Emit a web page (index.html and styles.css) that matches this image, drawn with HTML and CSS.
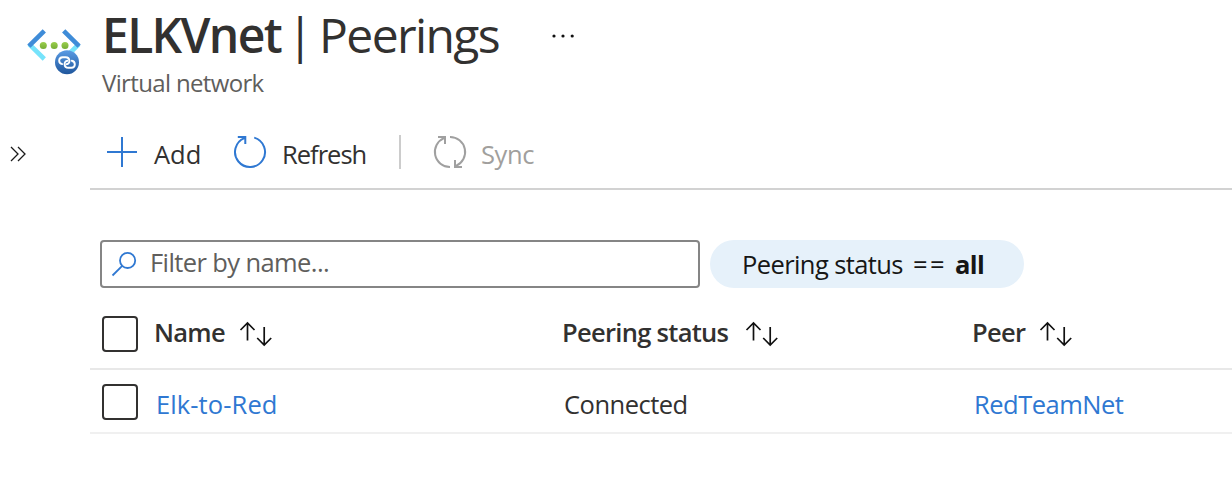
FILE: index.html
```html
<!DOCTYPE html>
<html lang="en">
<head>
<meta charset="utf-8">
<title>ELKVnet | Peerings</title>
<link rel="stylesheet" href="styles.css">
</head>
<body>
<svg class="defs" width="0" height="0">
  <symbol id="sort" viewBox="0 0 34 26"><path d="M8.500 19.500V2M1.500 9l7-7 7 7M25.200 6v17M18.200 17l7 7 7-7"/></symbol>
</svg>
<header class="header">
  <svg class="logo" viewBox="0 0 56 50">
    <defs>
      <linearGradient id="ball" x1="0" y1="0" x2="0" y2="1"><stop offset="0" stop-color="#5a9be4"/><stop offset="1" stop-color="#1f569c"/></linearGradient>
      <linearGradient id="dot" x1="0" y1="0" x2="0" y2="1"><stop offset="0" stop-color="#9bcf4d"/><stop offset="1" stop-color="#76ad35"/></linearGradient>
    </defs>
    <g fill="none" stroke-width="4.600">
      <path stroke="#76e3fb" d="M3.200 18.200 18.300 33M52.800 18.200 38 33"/>
      <path stroke="#3f8cd8" d="M18.300 4.800 2.900 20.200M37.700 4.800 53.100 20.200"/>
    </g>
    <g fill="url(#dot)"><circle cx="17.300" cy="19.500" r="3.500"/><circle cx="28.200" cy="19.500" r="3.500"/><circle cx="39" cy="19.500" r="3.500"/></g>
    <circle cx="41" cy="36.200" r="12" fill="url(#ball)"/>
    <g fill="none" stroke="#fff" stroke-width="1.900" stroke-linecap="round">
      <path d="M36.200 38.100C32.200 37.500 32 31.500 36.600 31.200H39.600C44.400 31.200 44.700 38 40.500 38.300"/>
      <path d="M45.800 34.700C49.800 35.500 50 41.500 45.400 41.800H42.400C37.600 41.800 37.300 35 41.500 34.700"/>
    </g>
  </svg>
  <div class="heading">
    <h1 class="title"><b class="resource">ELKVnet</b><span class="bar">|</span><span class="section">Peerings</span>
      <svg class="more" viewBox="0 0 24 4"><circle cx="2" cy="2" r="1.600"/><circle cx="11" cy="2" r="1.600"/><circle cx="20.200" cy="2" r="1.600"/></svg>
    </h1>
    <p class="subtitle">Virtual network</p>
  </div>
</header>
<div class="body">
  <nav class="rail"><svg class="expand" viewBox="0 0 18 18"><path d="M2 2l7 7-7 7M9 2l7 7-7 7"/></svg></nav>
  <main class="main">
    <div class="toolbar">
      <svg class="icon add-icon" viewBox="0 0 34 34"><path d="M17 2v30M2 17h30"/></svg>
      <span class="label add">Add</span>
      <svg class="icon refresh-icon" viewBox="0 0 34 34"><path d="M21.200 2.600A15 15 0 1 1 11.400 3.100M4.800 2h7.500V9"/></svg>
      <span class="label refresh">Refresh</span>
      <span class="divider"></span>
      <svg class="icon sync-icon" viewBox="0 0 34 34"><path d="M17 32A15 15 0 0 1 11 3.200M5 2h7V9M17 2A15 15 0 0 1 23 30.800M29 32H22V25"/></svg>
      <span class="label sync">Sync</span>
    </div>
    <div class="filters">
      <div class="search">
        <svg class="glass" viewBox="0 0 26 26"><circle cx="16.600" cy="9.400" r="7.600"/><path d="M11.200 14.800 1.500 24.500"/></svg>
        <span class="placeholder">Filter by name...</span>
      </div>
      <div class="pill"><span class="pill-name">Peering status</span><span class="pill-op">==</span><b class="pill-value">all</b></div>
    </div>
    <div class="row head">
      <span class="check"></span>
      <div class="cell c1"><span class="h-name">Name</span><svg class="sort"><use href="#sort"/></svg></div>
      <div class="cell c2"><span class="h-status">Peering status</span><svg class="sort"><use href="#sort"/></svg></div>
      <div class="cell c3"><span class="h-peer">Peer</span><svg class="sort"><use href="#sort"/></svg></div>
    </div>
    <div class="row item">
      <span class="check"></span>
      <div class="cell c1"><a class="link elk">Elk-to-Red</a></div>
      <div class="cell c2"><span class="connected">Connected</span></div>
      <div class="cell c3"><a class="link red">RedTeamNet</a></div>
    </div>
  </main>
</div>
</body>
</html>
```
FILE: styles.css
```css
* { box-sizing: border-box; }
body { margin: 0; height: 480px; overflow: hidden; background: #fff; color: #323130; font: 400 25.5px/34px "Open Sans", "Noto Sans", sans-serif; white-space: nowrap; }
svg { flex: none; display: block; }
.defs { display: none; }
.header { display: flex; height: 128px; padding: 5px 0 0 26px; }
.logo { width: 56px; height: 50px; margin-top: 21px; }
.heading { padding-left: 20px; }
.title { display: flex; margin: 0; height: 62px; font-size: 48px; line-height: 60px; font-weight: 400; }
.resource { width: 185px; font-weight: 600; letter-spacing: -1.65px; }
.bar { width: 32px; }
.section { width: 233px; letter-spacing: -1.6px; }
.more { width: 24px; height: 4px; margin-top: 29px; fill: #111; }
.subtitle { margin: 0; font-size: 24px; line-height: 31px; letter-spacing: -.65px; color: #605e5c; }
.body { display: flex; }
.rail { width: 90px; padding: 17px 0 0 9px; }
.expand { width: 18px; height: 18px; fill: none; stroke: #1b1b1b; stroke-width: 1.3; }
.main { flex: 1; }
.toolbar { display: flex; align-items: center; height: 62px; padding: 0 0 12px 15px; border-bottom: 2px solid #d2d2d2; }
.icon { width: 34px; height: 34px; fill: none; stroke: #2f78d2; stroke-width: 2; }
.label { height: 34px; line-height: 39px; }
.add { width: 79px; margin-left: 15px; }
.refresh { width: 117px; margin-left: 15px; letter-spacing: -1px; }
.divider { width: 2px; height: 34px; background: #ccc; margin-right: 32px; }
.icon.sync-icon { stroke: #a0a0a0; }
.sync { margin-left: 14px; letter-spacing: -.4px; color: #a19f9d; }
.filters { display: flex; gap: 10px; padding: 50px 0 0 10px; }
.search { display: flex; width: 600px; height: 48px; padding-left: 9px; border: 2px solid #858585; border-radius: 4px; }
.glass { width: 26px; height: 26px; margin-top: 9px; fill: none; stroke: #2f78d2; stroke-width: 1.8; }
.placeholder { margin-left: 13px; line-height: 41px; letter-spacing: -.6px; color: #605e5c; }
.pill { display: flex; width: 314px; height: 48px; padding-left: 32px; border-radius: 24px; background: #e6f1fa; color: #161616; line-height: 49px; letter-spacing: -.6px; }
.pill-name { width: 171px; }
.pill-op { width: 42px; letter-spacing: 2.5px; }
.pill-value { font-weight: 700; }
.row { display: flex; }
.head { height: 82px; padding-top: 28px; border-bottom: 2px solid #e8e8e8; font-weight: 600; letter-spacing: -.7px; }
.item { height: 64px; padding-top: 14px; border-bottom: 2px solid #f0f0f0; }
.check { width: 36px; height: 36px; margin: 0 16px 0 12px; border: 2px solid #323130; border-radius: 4px; }
.cell { display: flex; line-height: 33px; }
.item .cell { line-height: 41px; padding-left: 2px; }
.c1 { width: 408px; }
.c2 { width: 410px; }
.sort { width: 34px; height: 26px; margin-top: 5px; fill: none; stroke: #111; stroke-width: 1.7; }
.h-name { width: 85px; }
.h-status { width: 183px; }
.h-peer { width: 67px; }
.link { color: #2f78d2; }
.elk { letter-spacing: .1px; }
.connected, .red { letter-spacing: -.5px; }
```
